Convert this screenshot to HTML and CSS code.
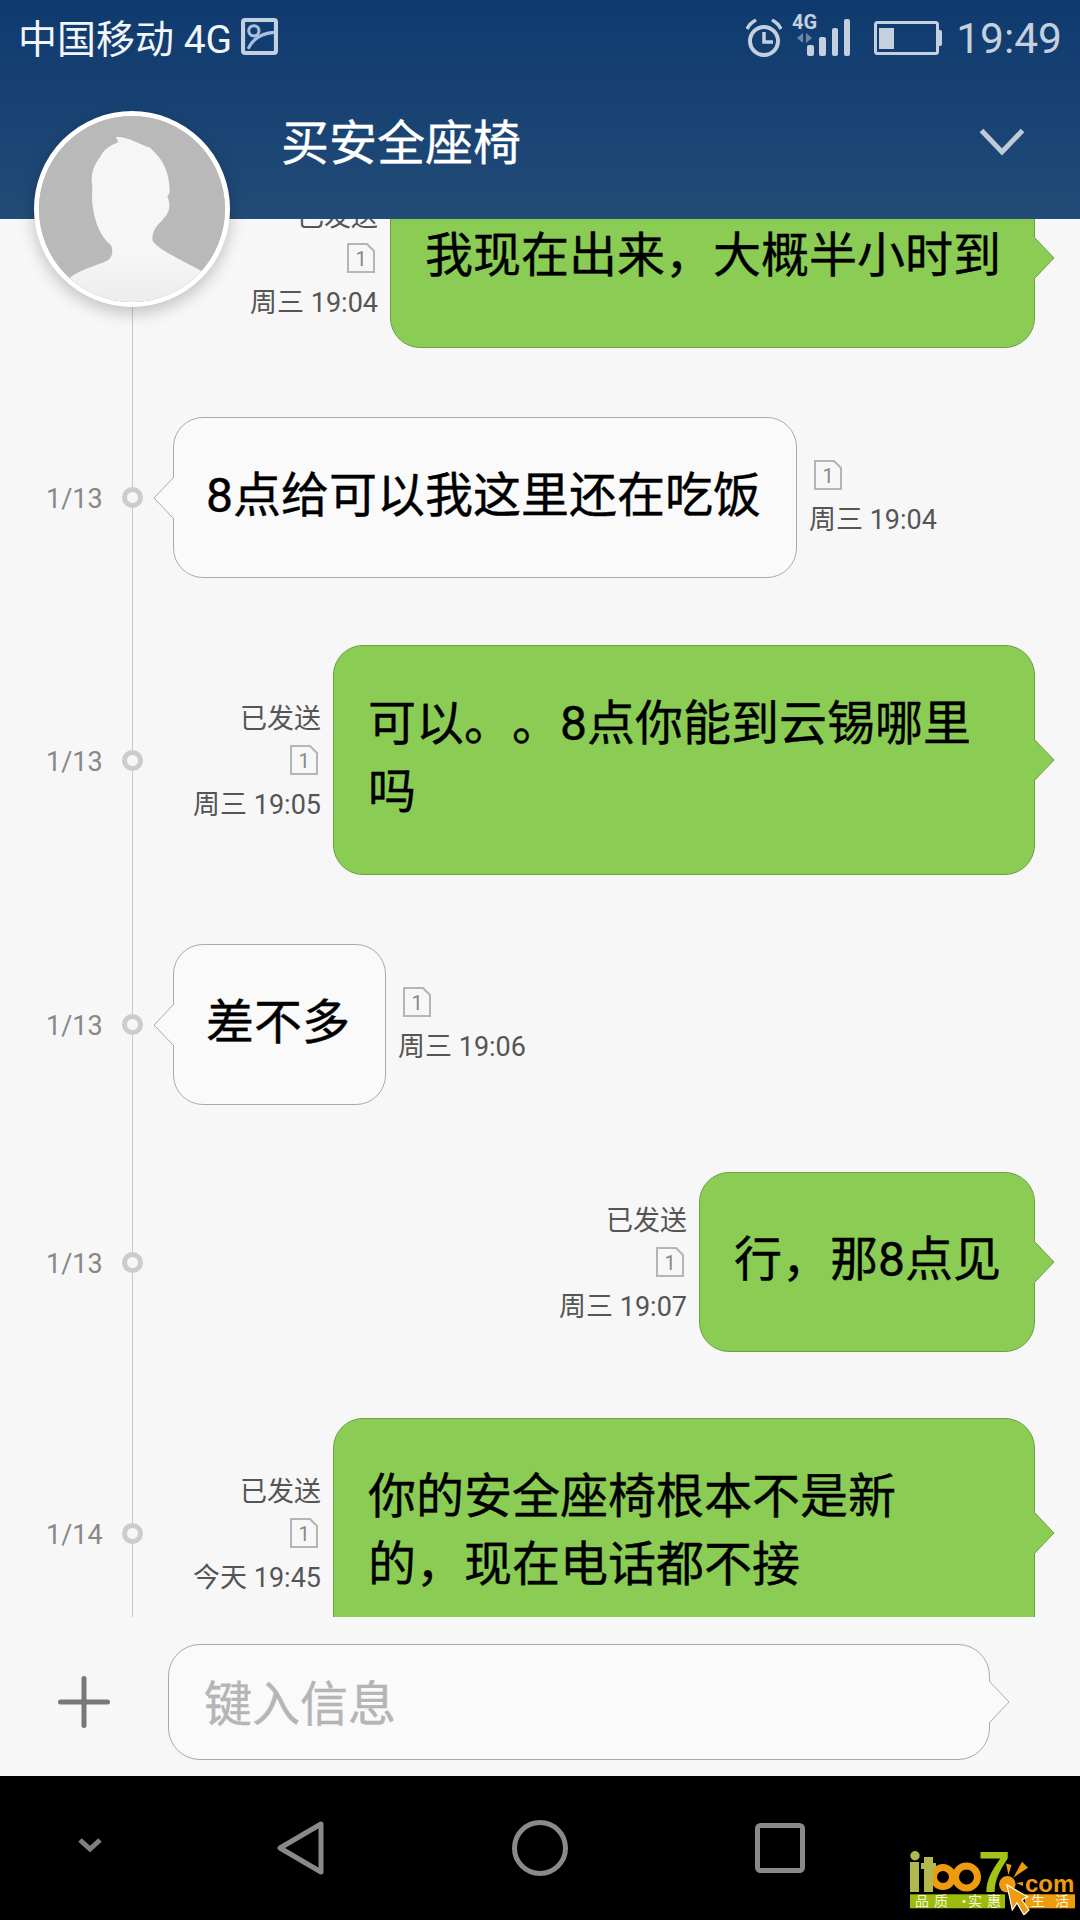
FILE: index.html
```html
<!DOCTYPE html>
<html lang="zh-CN">
<head>
<meta charset="utf-8">
<title>买安全座椅</title>
<link rel="stylesheet" href="styles.css">
</head>
<body>
<div class="phone">
  <header class="header">
    <div class="status">
      <div class="status-left">
        <span class="carrier">中国移动 4G</span>
        <svg class="pic-icon" viewBox="0 0 36 36"><rect x="2" y="2" width="32" height="32" rx="2" fill="none" stroke="#c3d0e2" stroke-width="4"/><circle cx="12.5" cy="12.5" r="5" fill="none" stroke="#a9bfdb" stroke-width="3"/><path d="M7 30C11 21 20 15 32 14" fill="none" stroke="#a9bfdb" stroke-width="3"/></svg>
      </div>
      <div class="status-right">
        <svg class="alarm" viewBox="0 0 36 38"><circle cx="18" cy="22" r="14" fill="none" stroke="#c5d0de" stroke-width="4"/><path d="M18 13V23H27" fill="none" stroke="#c5d0de" stroke-width="3.5"/><path d="M1 10C3 6 6 3 10 1M35 10C33 6 30 3 26 1" fill="none" stroke="#c5d0de" stroke-width="3.5"/></svg>
        <svg class="signal" viewBox="0 0 60 44"><text x="0" y="15" class="net-label">4G</text><path d="M11 19L5 24L11 29ZM14 19L20 24L14 29Z" fill="#6c86a5"/><rect x="15" y="31" width="7" height="11" rx="2" fill="#c5d0de"/><rect x="27" y="23" width="7" height="19" rx="2" fill="#c5d0de"/><rect x="40" y="14" width="6" height="28" rx="2" fill="#c5d0de"/><rect x="52" y="5" width="6" height="37" rx="2" fill="#c5d0de"/></svg>
        <svg class="battery" viewBox="0 0 68 34"><rect x="1.5" y="1.5" width="62" height="31" rx="2" fill="none" stroke="#c5d0de" stroke-width="3"/><rect x="5" y="7" width="15" height="21" fill="#c5d0de"/><path d="M64 9H66A2 2 0 0 1 68 11V23A2 2 0 0 1 66 25H64Z" fill="#c5d0de"/></svg>
        <span class="clock">19:49</span>
      </div>
    </div>
    <div class="title-row">
      <h1 class="title">买安全座椅</h1>
      <svg class="collapse" viewBox="0 0 46 28"><path d="M2.5 2.5L23 24L43.5 2.5" fill="none" stroke="#c0cbd8" stroke-width="5"/></svg>
    </div>
  </header>

  <div class="avatar">
    <svg viewBox="27 30 558 558" class="avatar-img">
      <defs><linearGradient id="body" x1="0" y1="0" x2="0" y2="1"><stop offset="0.7" stop-color="#f6f6f6"/><stop offset="1" stop-color="#ececec"/></linearGradient></defs>
      <rect x="27" y="30" width="558" height="558" fill="#b9b9b9"/>
      <path fill="url(#body)" d="M258 93C290 90 330 115 360 125C400 160 415 195 418 240C420 255 420 262 412 272C418 285 418 290 418 300C418 320 405 335 385 355C370 372 365 390 368 405C385 430 440 455 515 495L570 600L50 600L120 515C150 490 200 480 235 462C250 450 250 425 240 415C215 395 195 355 188 300C183 270 190 245 185 225C185 190 195 175 212 150C225 125 250 115 265 108Z"/>
    </svg>
  </div>

  <main class="chat">
    <div class="timeline"></div>
    <ul class="list">
      <li class="row row-out">
        <span class="date"></span><span class="dot dot-hidden"></span>
        <div class="thread">
          <div class="meta meta-out">
            <span class="meta-text">已发送</span>
            <svg class="sim" viewBox="0 0 28 30"><path d="M1 1H20L27 8V29H1Z" fill="none" stroke="#b5b5b5" stroke-width="2"/><text x="14" y="23" class="sim-num">1</text></svg>
            <span class="meta-text">周三 19:04</span>
          </div>
          <div class="bubble bubble-green bubble-md">我现在出来，大概半小时到<svg class="tail tail-right" viewBox="0 0 21 44"><path d="M0 1L20 22L0 43" fill="#8bcd54" stroke="#6f9f45"/></svg></div>
        </div>
      </li>
      <li class="row row-in">
        <span class="date">1/13</span><span class="dot"></span>
        <div class="thread">
          <div class="bubble bubble-white bubble-sm">8点给可以我这里还在吃饭<svg class="tail tail-left" viewBox="0 0 21 44"><path d="M21 1L1 22L21 43" fill="#fafafa" stroke="#aaa"/></svg></div>
          <div class="meta meta-in">
            <svg class="sim" viewBox="0 0 28 30"><path d="M1 1H20L27 8V29H1Z" fill="none" stroke="#b5b5b5" stroke-width="2"/><text x="14" y="23" class="sim-num">1</text></svg>
            <span class="meta-text">周三 19:04</span>
          </div>
        </div>
      </li>
      <li class="row row-out">
        <span class="date">1/13</span><span class="dot"></span>
        <div class="thread">
          <div class="meta meta-out">
            <span class="meta-text">已发送</span>
            <svg class="sim" viewBox="0 0 28 30"><path d="M1 1H20L27 8V29H1Z" fill="none" stroke="#b5b5b5" stroke-width="2"/><text x="14" y="23" class="sim-num">1</text></svg>
            <span class="meta-text">周三 19:05</span>
          </div>
          <div class="bubble bubble-green bubble-lg">可以。。8点你能到云锡哪里吗<svg class="tail tail-right" viewBox="0 0 21 44"><path d="M0 1L20 22L0 43" fill="#8bcd54" stroke="#6f9f45"/></svg></div>
        </div>
      </li>
      <li class="row row-in">
        <span class="date">1/13</span><span class="dot"></span>
        <div class="thread">
          <div class="bubble bubble-white bubble-sm">差不多<svg class="tail tail-left" viewBox="0 0 21 44"><path d="M21 1L1 22L21 43" fill="#fafafa" stroke="#aaa"/></svg></div>
          <div class="meta meta-in">
            <svg class="sim" viewBox="0 0 28 30"><path d="M1 1H20L27 8V29H1Z" fill="none" stroke="#b5b5b5" stroke-width="2"/><text x="14" y="23" class="sim-num">1</text></svg>
            <span class="meta-text">周三 19:06</span>
          </div>
        </div>
      </li>
      <li class="row row-out">
        <span class="date">1/13</span><span class="dot"></span>
        <div class="thread">
          <div class="meta meta-out">
            <span class="meta-text">已发送</span>
            <svg class="sim" viewBox="0 0 28 30"><path d="M1 1H20L27 8V29H1Z" fill="none" stroke="#b5b5b5" stroke-width="2"/><text x="14" y="23" class="sim-num">1</text></svg>
            <span class="meta-text">周三 19:07</span>
          </div>
          <div class="bubble bubble-green bubble-md">行，那8点见<svg class="tail tail-right" viewBox="0 0 21 44"><path d="M0 1L20 22L0 43" fill="#8bcd54" stroke="#6f9f45"/></svg></div>
        </div>
      </li>
      <li class="row row-out row-last">
        <span class="date">1/14</span><span class="dot"></span>
        <div class="thread">
          <div class="meta meta-out">
            <span class="meta-text">已发送</span>
            <svg class="sim" viewBox="0 0 28 30"><path d="M1 1H20L27 8V29H1Z" fill="none" stroke="#b5b5b5" stroke-width="2"/><text x="14" y="23" class="sim-num">1</text></svg>
            <span class="meta-text">今天 19:45</span>
          </div>
          <div class="bubble bubble-green bubble-lg">你的安全座椅根本不是新的，现在电话都不接<svg class="tail tail-right" viewBox="0 0 21 44"><path d="M0 1L20 22L0 43" fill="#8bcd54" stroke="#6f9f45"/></svg></div>
        </div>
      </li>
    </ul>
  </main>

  <footer class="composer">
    <svg class="plus" viewBox="0 0 52 52"><path d="M2.5 26H49.5M26 2.5V49.5" fill="none" stroke="#787878" stroke-width="5" stroke-linecap="round"/></svg>
    <div class="input">键入信息<svg class="tail tail-input" viewBox="0 0 21 44"><path d="M0 1L20 22L0 43" fill="#fafafa" stroke="#aaa"/></svg></div>
  </footer>

  <nav class="nav">
    <svg class="nav-hide" viewBox="0 0 26 15"><path d="M3 3L13 12L23 3" fill="none" stroke="#808080" stroke-width="5"/></svg>
    <svg class="nav-back" viewBox="0 0 47 54"><path d="M44 3V51L3 27Z" fill="none" stroke="#8a8a8a" stroke-width="5" stroke-linejoin="round"/></svg>
    <svg class="nav-home" viewBox="0 0 56 56"><circle cx="28" cy="28" r="25.5" fill="none" stroke="#8a8a8a" stroke-width="5"/></svg>
    <svg class="nav-recent" viewBox="0 0 50 50"><rect x="2.5" y="2.5" width="45" height="45" rx="3" fill="none" stroke="#8a8a8a" stroke-width="5"/></svg>
    <svg class="logo" viewBox="0 0 165 65">
      <circle cx="5" cy="5.700" r="4.700" class="logo-olive"/>
      <rect x="0" y="12" width="9" height="30" class="logo-olive"/>
      <circle cx="33" cy="27" r="9.500" fill="none" class="logo-ring"/>
      <circle cx="56.500" cy="27" r="11" fill="none" class="logo-ring"/>
      <path d="M14 7H23V13H26V19H23V42H14V19H11V13H14Z" class="logo-olive"/>
      <text x="68" y="42" class="logo-seven">7</text>
      <path d="M96 13.500L101.500 15L98.500 25ZM112 11.700L118 17.700L103.300 27.700ZM106 33L113 32V36Z" class="logo-orange"/>
      <circle cx="97.300" cy="34.300" r="8.300" class="logo-orange"/>
      <text x="115" y="42" class="logo-com">com</text>
      <rect x="0" y="44.300" width="95" height="14" class="logo-lime"/>
      <rect x="115" y="44.300" width="50" height="14" class="logo-orange"/>
      <text x="5 24 47 58 77" y="56" class="logo-band">品质·实惠</text>
      <text x="121 145" y="56" class="logo-band">生活</text>
      <path d="M97 35L102.300 60L107 53L114 65L119 60L112 50L117.600 46.700Z" fill="#ef9b10" stroke="#fff" stroke-width="1.200"/>
    </svg>
  </nav>
</div>
</body>
</html>
```
FILE: styles.css
```css
* { box-sizing: border-box; }
html, body { margin: 0; padding: 0; }
body { width: 1080px; height: 1920px; overflow: hidden; font-family: Roboto, "Noto Sans CJK SC", sans-serif; text-spacing-trim: space-all; }
.phone { position: relative; width: 1080px; height: 1920px; display: flex; flex-direction: column; background: #f7f7f7; }

.header { height: 219px; flex: none; background: linear-gradient(#0f3a6f, #224b77); color: #fff; display: flex; flex-direction: column; position: relative; z-index: 2; }
.status { height: 76px; display: flex; justify-content: space-between; align-items: center; padding: 0 18px; }
.status-left { display: flex; align-items: center; gap: 9px; }
.carrier { font-size: 39px; color: #f2f5f9; white-space: nowrap; margin-bottom: 4px; }
.pic-icon { width: 37px; height: 37px; display: block; margin-top: -4px; }
.status-right { display: flex; align-items: center; }
.alarm { width: 36px; height: 38px; display: block; margin-right: 10px; }
.signal { width: 60px; height: 44px; display: block; margin-top: -5px; margin-right: 22px; }
.net-label { font: bold 20px Roboto, sans-serif; fill: #c5d0de; }
.battery { width: 68px; height: 34px; display: block; margin-right: 14px; }
.clock { font-size: 42.500px; color: #c5d0de; }

.title-row { height: 132px; display: flex; align-items: center; justify-content: space-between; padding: 0 55px 0 281px; }
.title { margin: 0 0 6px; font-size: 48px; font-weight: 400; color: #fff; -webkit-text-stroke: .3px #fff; }
.collapse { width: 46px; height: 28px; display: block; }

.avatar { position: absolute; left: 34px; top: 111px; width: 196px; height: 196px; border-radius: 50%; border: 5px solid #fff; overflow: hidden; z-index: 3; box-shadow: 0 6px 16px rgba(0,0,0,.22); background: #b9b9b9; }
.avatar-img { width: 100%; height: 100%; display: block; }

.chat { position: relative; flex: 1; min-height: 0; overflow: hidden; }
.timeline { position: absolute; left: 132px; top: 0; bottom: 0; width: 1px; background: #c8c8c8; }
.list { list-style: none; margin: -51px 0 0; padding: 0; display: flex; flex-direction: column; gap: 67px; position: relative; }
.row { display: flex; align-items: center; padding: 0 45px 0 46px; }
.row-in { margin-top: 2px; }
.row-last { margin-top: -1px; }
.date { width: 66px; flex: none; font-size: 27px; color: #888; padding-top: 3px; }
.dot { width: 21px; height: 21px; flex: none; margin-left: 10px; border: 5px solid #ccc; border-radius: 50%; background: #f7f7f7; }
.dot-hidden { visibility: hidden; }
.thread { flex: 1; min-width: 0; margin-left: 30px; display: flex; align-items: center; gap: 12px; }
.row-out .thread { justify-content: flex-end; }

.bubble { position: relative; flex: none; display: flex; align-items: center; font-size: 48px; line-height: 68px; color: #000; -webkit-text-stroke: .4px #000; border-radius: 30px; border: 1px solid; padding: 0 35px 4px 32px; }
.bubble-green { background: #8bcd54; border-color: #6f9f45; padding-left: 34px; padding-right: 33px; }
.bubble-white { background: #fafafa; border-color: #aaa; }
.bubble-sm { height: 161px; }
.bubble-md { height: 180px; }
.bubble-lg { height: 230px; width: 702px; padding: 0 57px 4px 34px; }

.tail { position: absolute; top: 50%; width: 21px; height: 44px; margin-top: -22px; display: block; }
.tail-left { left: -21px; }
.tail-right { right: -21px; }
.tail-input { right: -21px; }

.meta { display: flex; flex-direction: column; gap: 12px; padding-top: 3px; font-size: 27px; color: #555; flex: none; line-height: 32px; }
.meta-out { align-items: flex-end; }
.meta-out .sim { margin-right: 3px; }
.meta-in { align-items: flex-start; }
.meta-in .sim { margin-left: 5px; }
.meta-text { white-space: nowrap; }
.sim { width: 28px; height: 30px; display: block; margin: -2px 0 2px; }
.sim-num { font: 20px Roboto, sans-serif; fill: #888; text-anchor: middle; }

.composer { height: 159px; flex: none; display: flex; align-items: center; padding: 11px 0 0 58px; gap: 58px; }
.plus { width: 52px; height: 52px; display: block; flex: none; }
.input { position: relative; width: 822px; height: 116px; display: flex; align-items: center; padding: 0 0 4px 35px; border: 1px solid #aaa; border-radius: 32px; background: #fafafa; font-size: 48px; color: #b5b5b5; -webkit-text-stroke: .4px #b5b5b5; }

.nav { position: relative; height: 144px; flex: none; background: #000; display: flex; align-items: center; padding-left: 77px; }
.nav-hide { width: 26px; height: 15px; display: block; margin-top: -8px; margin-right: 174px; }
.nav-back { width: 47px; height: 54px; display: block; margin-right: 188px; }
.nav-home { width: 56px; height: 56px; display: block; margin-right: 187px; }
.nav-recent { width: 50px; height: 50px; display: block; }
.logo { position: absolute; left: 910px; top: 74px; width: 165px; height: 65px; display: block; }
.logo-olive { fill: #b3b84e; }
.logo-orange { fill: #ef9b10; }
.logo-lime { fill: #9dbb0f; }
.logo-ring { stroke: #ef9b10; stroke-width: 7; }
.logo-seven { font: bold 58px "Liberation Sans", sans-serif; fill: #a2c416; }
.logo-com { font: bold 24px "Liberation Sans", sans-serif; fill: #ef9b10; }
.logo-band { font: 14px "Noto Sans CJK SC", sans-serif; fill: #f6f6d8; }
```
